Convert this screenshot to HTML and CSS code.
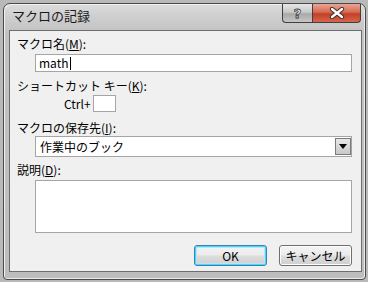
FILE: index.html
```html
<!DOCTYPE html>
<html lang="ja">
<head>
    <meta charset="UTF-8">
    <title>マクロの記録</title>
    <link rel="stylesheet" href="styles.css">
</head>
<body>
    <div class="window">
        <div class="titlebar">
            <span class="title">マクロの記録</span>
            <div class="caption-buttons">
                <div class="cap-btn help">?</div>
                <div class="cap-btn close">
                    <svg width="16" height="12" viewBox="0 0 16 12">
                        <path d="M3 2 L13 10 M13 2 L3 10" stroke="#3a2a28" stroke-width="4.2" stroke-linecap="round"/>
                        <path d="M3 2 L13 10 M13 2 L3 10" stroke="#fff" stroke-width="2.4" stroke-linecap="round"/>
                    </svg>
                </div>
            </div>
        </div>
        <div class="client">
            <div class="label l1">マクロ名(<u>M</u>):</div>
            <div class="textbox name-box">math<span class="caret"></span></div>

            <div class="label l2">ショートカット キー(<u>K</u>):</div>
            <div class="ctrl-row">
                <span class="ctrl">Ctrl+</span>
                <div class="textbox key-box"></div>
            </div>

            <div class="label l3">マクロの保存先(<u>I</u>):</div>
            <div class="combo">
                <span class="combo-text">作業中のブック</span>
                <div class="drop">
                    <svg width="8" height="5" viewBox="0 0 8 5"><path d="M0 0 H8 L4 5 Z" fill="#000"/></svg>
                </div>
            </div>

            <div class="label l4">説明(<u>D</u>):</div>
            <div class="textbox memo"></div>

            <div class="buttons">
                <div class="btn default">OK</div>
                <div class="btn">キャンセル</div>
            </div>
        </div>
    </div>
</body>
</html>
```

FILE: styles.css
```css
body {
    margin: 0;
    width: 368px;
    height: 282px;
    overflow: hidden;
    background: #b9b9b9;
    font-family: "Noto Sans CJK JP", "Noto Sans", sans-serif;
    font-size: 12px;
    color: #000;
}
.window {
    margin: 3px 0 0 3px;
    width: 353px;
    height: 275px;
    border: 1px solid #4a4a4a;
    border-radius: 7px 7px 4px 4px;
    background: linear-gradient(to bottom, #dcdcdc 0px, #cdcdcd 14px, #c2c2c2 30px, #bdbdbd 100%);
    box-shadow: inset 1px 1px 0 #f0f0f0, inset -1px -1px 0 #eaeaea;
    padding: 0 3px 0 5px;
}
.titlebar {
    height: 26px;
    display: flex;
    justify-content: space-between;
    align-items: flex-start;
}
.title {
    font-size: 13px;
    line-height: 14px;
    margin-top: 5px;
    margin-left: 3px;
    color: #1a1a1a;
}
.caption-buttons {
    display: flex;
    margin-right: 1px;
}
.cap-btn {
    height: 18px;
    border: 1px solid #3f3f3f;
    border-top: none;
    display: flex;
    align-items: center;
    justify-content: center;
}
.help {
    width: 29px;
    border-right: none;
    border-radius: 0 0 0 4px;
    background: linear-gradient(to bottom, #e6e6e6 0%, #c9c9c9 45%, #a9a9a9 55%, #c6c6c6 100%);
    color: #fff;
    font-family: "DejaVu Sans", sans-serif;
    font-weight: bold;
    font-size: 13px;
    -webkit-text-stroke: 0.8px #333;
}
.close {
    width: 47px;
    border-radius: 0 0 4px 0;
    background: linear-gradient(to bottom, #e9a595 0%, #d86a52 45%, #c0402a 55%, #d9644a 100%);
}
.client {
    width: 344px;
    height: 240px;
    border: 1px solid #6d6d6d;
    background: #f0f0f0;
    padding: 0 0 0 7px;
}
.label {
    line-height: 14px;
    height: 14px;
}
.l1 { margin-top: 6px; }
.l2 { margin-top: 7px; }
.l3 { margin-top: 9px; }
.l4 { margin-top: 6px; }
.textbox {
    background: #fff;
    border: 1px solid #a5a5a5;
    box-sizing: border-box;
}
.name-box {
    margin: 3px 0 0 18px;
    width: 317px;
    height: 18px;
    line-height: 16px;
    padding-left: 3px;
    display: flex;
    align-items: center;
}
.caret {
    display: inline-block;
    width: 1px;
    height: 13px;
    background: #000;
    margin-left: 1px;
}
.ctrl-row {
    display: flex;
    align-items: center;
    margin-top: 2px;
    height: 17px;
}
.ctrl {
    margin-left: 47px;
    width: 29px;
}
.key-box {
    width: 23px;
    height: 17px;
}
.combo {
    margin: 1px 0 0 18px;
    width: 317px;
    height: 21px;
    background: #fff;
    border: 1px solid #a5a5a5;
    box-sizing: border-box;
    display: flex;
    justify-content: space-between;
    align-items: center;
}
.combo-text {
    padding-left: 4px;
}
.drop {
    width: 16px;
    height: 17px;
    border: 1px solid #7a7a7a;
    box-sizing: border-box;
    background: linear-gradient(to bottom, #e8e8e8, #c8c8c8);
    display: flex;
    align-items: center;
    justify-content: center;
}
.memo {
    margin: 3px 0 0 18px;
    width: 317px;
    height: 53px;
}
.buttons {
    display: flex;
    justify-content: flex-end;
    gap: 12px;
    margin-top: 12px;
    padding-right: 9px;
}
.btn {
    width: 73px;
    height: 21px;
    box-sizing: border-box;
    border: 1px solid #707070;
    border-radius: 3px;
    background: linear-gradient(to bottom, #f4f4f4 0%, #ebebeb 48%, #dddddd 52%, #cfcfcf 100%);
    box-shadow: inset 0 0 0 1px #fcfcfc;
    text-align: center;
    line-height: 19px;
}
.default {
    border-color: #3c7fb1;
    box-shadow: inset 0 0 0 1px #48d8fb, inset 0 0 0 2px #b8e4f5;
}
```
